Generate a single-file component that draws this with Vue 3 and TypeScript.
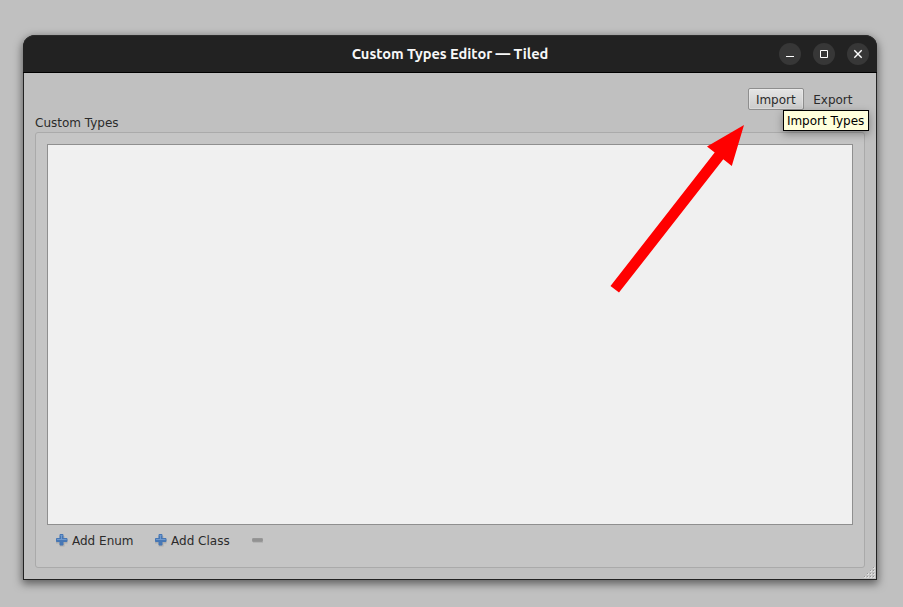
<script setup lang="ts">
import { ref } from 'vue'

interface AddAction {
  id: string
  label: string
}

const title = 'Custom Types Editor — Tiled'
const tooltip = ref('Import Types')
const addActions: AddAction[] = [
  { id: 'enum', label: 'Add Enum' },
  { id: 'class', label: 'Add Class' },
]
const gripDots = [
  [9, 0],
  [6, 3], [9, 3],
  [3, 6], [6, 6], [9, 6],
  [0, 9], [3, 9], [6, 9], [9, 9],
]
</script>

<template>
  <main class="desktop">
    <section class="window">
      <header class="titlebar">
        <h1 class="title">{{ title }}</h1>
        <div class="controls">
          <button class="control" aria-label="Minimize">
            <svg viewBox="0 0 22 22"><path d="M7 13.5h8" /></svg>
          </button>
          <button class="control" aria-label="Maximize">
            <svg viewBox="0 0 22 22"><path d="M7.5 7.5h7v7h-7z" /></svg>
          </button>
          <button class="control" aria-label="Close">
            <svg viewBox="0 0 22 22"><path class="cross" d="M7.3 7.3l7.4 7.4M14.7 7.3l-7.4 7.4" /></svg>
          </button>
        </div>
      </header>

      <div class="content">
        <nav class="toolbar">
          <button class="tool raised">
            Import
            <span class="tooltip">{{ tooltip }}</span>
          </button>
          <button class="tool">Export</button>
        </nav>
        <h2 class="group-title">Custom Types</h2>
        <div class="group">
          <div class="list"></div>
          <div class="actions">
            <button v-for="action in addActions" :key="action.id" class="action">
              <svg class="icon" viewBox="0 0 12 14">
                <path class="shade" d="M3.5 3h5v3.5h3v4h-3v3h-5v-3H0v-4h3.5z" />
                <path class="plus" d="M4 1.5h3v4h4v3H7V12H4V8.5H.5v-3H4z" />
                <path class="shine" d="M4.5 2.5h2M5.5 2.5v4M1 6.5h9.5" />
              </svg>
              {{ action.label }}
            </button>
            <button class="action remove" aria-label="Remove" disabled>
              <svg class="icon" viewBox="0 0 12 14">
                <path class="minus-shade" d="M1 9.5h10" />
                <rect class="minus" x="0.5" y="5.5" width="10" height="3" rx="0.5" />
              </svg>
            </button>
          </div>
        </div>
      </div>

      <svg class="grip" viewBox="0 0 12 12" shape-rendering="crispEdges">
        <g v-for="([x, y], i) in gripDots" :key="i">
          <rect :x="x" :y="y" width="2" height="2" fill="#dddddd" />
          <rect :x="x" :y="y" width="1" height="1" fill="#999999" />
        </g>
      </svg>
    </section>

    <svg class="arrow" viewBox="0 0 135 169">
      <polygon points="134,0 97,21.5 104.7,27.5 0.5,161 9,167.6 113.3,34.3 121.8,41" />
    </svg>
  </main>
</template>

<style>
body {
  margin: 0;
  background: #c0c0c0;
}
</style>

<style scoped>
.desktop {
  position: relative;
  box-sizing: border-box;
  width: 903px;
  height: 607px;
  padding: 35px 26px 27px 23px;
  overflow: hidden;
  background: #c0c0c0;
  font: 12px/14px "DejaVu Sans", sans-serif;
  color: #2b2b2b;
}

.window {
  position: relative;
  display: flex;
  flex-direction: column;
  box-sizing: border-box;
  height: 545px;
  border: 1px solid #222222;
  border-top: 0;
  border-radius: 12px 12px 0 0;
  background: #c0c0c0;
  box-shadow: 0 3px 9px 1px rgba(0, 0, 0, 0.5);
}

.titlebar {
  display: grid;
  grid-template-columns: 1fr auto 1fr;
  align-items: center;
  box-sizing: border-box;
  height: 38px;
  margin: 0 -1px;
  padding: 0 8px;
  border-bottom: 1px solid #000000;
  border-radius: 12px 12px 0 0;
  background: #222222;
  box-shadow: inset 0 1px #2c2c2c;
}

.title {
  grid-column: 2;
  margin: 0;
  font: 600 14.667px/20px Ubuntu, "Noto Sans", sans-serif;
  letter-spacing: -0.05px;
  color: #f7f7f7;
  white-space: nowrap;
}

.controls {
  display: flex;
  justify-content: flex-end;
  gap: 12px;
}

.control {
  width: 22px;
  height: 22px;
  padding: 0;
  border: 0;
  border-radius: 50%;
  background: #373737;
}

.control svg {
  display: block;
  fill: none;
  stroke: #ffffff;
  stroke-width: 1;
}

.control .cross {
  stroke-width: 1.4;
}

.content {
  display: flex;
  flex: 1;
  flex-direction: column;
  padding: 15px 11px 11px;
}

.toolbar {
  display: flex;
  justify-content: flex-end;
  gap: 1.5px;
  padding-right: 4.5px;
}

.tool {
  position: relative;
  box-sizing: border-box;
  height: 22px;
  padding: 1px 7px 0;
  border: 1px solid transparent;
  border-radius: 2px;
  background: none;
  font: inherit;
  color: inherit;
}

.raised {
  border-color: #8e8e8e;
  background: linear-gradient(#e4e4e4, #cccccc);
  box-shadow: inset 0 0 0 1px rgba(255, 255, 255, 0.25);
}

.tooltip {
  position: absolute;
  top: 21px;
  left: 34px;
  z-index: 2;
  box-sizing: border-box;
  height: 21px;
  padding: 3px 4px 0 3px;
  border: 1px solid #000000;
  background: #ffffdc;
  box-shadow: 0 3px 9px rgba(0, 0, 0, 0.35);
  color: #000000;
  white-space: nowrap;
}

.group-title {
  margin: 6px 0 2px;
  font: inherit;
}

.group {
  display: flex;
  flex: 1;
  flex-direction: column;
  padding: 11px 11px 0;
  border: 1px solid #aaaaaa;
  border-radius: 3px;
  background: #c5c5c5;
}

.list {
  box-sizing: border-box;
  height: 381px;
  border: 1px solid #8f8f8f;
  background: #f0f0f0;
}

.actions {
  display: flex;
  gap: 21.5px;
  padding: 8px 9px 0;
}

.action {
  display: flex;
  align-items: center;
  gap: 4px;
  height: 15px;
  padding: 0;
  border: 0;
  background: none;
  font: inherit;
  color: inherit;
}

.icon {
  width: 12px;
  height: 14px;
  margin-bottom: 2px;
}

.shade {
  fill: rgba(0, 0, 0, 0.12);
}

.plus {
  fill: #4878b5;
  stroke: #4777b4;
  stroke-linejoin: round;
}

.shine {
  fill: none;
  stroke: #6f99ce;
  stroke-width: 1;
}

.minus {
  fill: #929292;
  stroke: #979797;
}

.minus-shade {
  stroke: #b5b5b5;
}

.remove {
  padding-left: 1px;
}

.grip {
  position: absolute;
  right: 0;
  bottom: 0;
  width: 12px;
  height: 12px;
}

.arrow {
  position: absolute;
  top: 125px;
  left: 610px;
  width: 135px;
  height: 169px;
  fill: #ff0000;
}
</style>
